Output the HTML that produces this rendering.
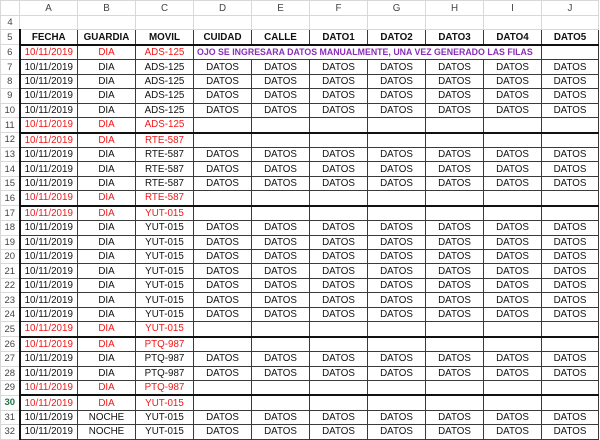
<!DOCTYPE html><html><head><style>
body{margin:0;background:#fff;width:600px;height:437px;overflow:hidden;font-family:"Liberation Sans",sans-serif;}
table{border-collapse:collapse;table-layout:fixed;position:absolute;left:0;top:0;font-size:9.8px;width:598px;}
td{padding:0;text-align:center;white-space:nowrap;overflow:visible;height:13.45px;line-height:13px;border:1px solid #3a3a3a;color:#111;}
td.n{border:1px solid #d8d8d8;color:#444;font-size:9.5px;}
tr.h td{height:14px;border:1px solid #d8d8d8;color:#444;background:#fff;}
tr.e td{border:1px solid #d8d8d8;}
tr.hd td{font-weight:bold;}
tr.hd td.n{font-weight:normal}
tr.t td{border-bottom:2px solid #111;}
tr.t td.n{border-bottom:1px solid #d8d8d8}
.r td{color:#f01818}
.r td.n{color:#444}
td.p{color:#8a2fb8;font-weight:bold;text-align:left;padding-left:3px;overflow:visible;font-size:8.8px}
td.a{border-left:2px solid #111}
</style></head><body>
<table>
<colgroup><col style="width:19px"><col style="width:58px"><col style="width:58px"><col style="width:58px"><col style="width:58px"><col style="width:58px"><col style="width:58px"><col style="width:58px"><col style="width:58px"><col style="width:58px"><col style="width:57px"></colgroup>
<tr class="h"><td></td><td>A</td><td>B</td><td>C</td><td>D</td><td>E</td><td>F</td><td>G</td><td>H</td><td>I</td><td>J</td></tr>
<tr class="e"><td class="n">4</td><td></td><td></td><td></td><td></td><td></td><td></td><td></td><td></td><td></td><td></td></tr>
<tr class="hd t"><td class="n">5</td><td class="a">FECHA</td><td>GUARDIA</td><td>MOVIL</td><td>CUIDAD</td><td>CALLE</td><td>DATO1</td><td>DATO2</td><td>DATO3</td><td>DATO4</td><td>DATO5</td></tr>
<tr class="r"><td class="n">6</td><td class="a">10/11/2019</td><td>DIA</td><td>ADS-125</td><td colspan="6" class="p">OJO SE INGRESARA DATOS MANUALMENTE, UNA VEZ GENERADO LAS FILAS</td><td></td></tr>
<tr><td class="n">7</td><td class="a">10/11/2019</td><td>DIA</td><td>ADS-125</td><td>DATOS</td><td>DATOS</td><td>DATOS</td><td>DATOS</td><td>DATOS</td><td>DATOS</td><td>DATOS</td></tr>
<tr><td class="n">8</td><td class="a">10/11/2019</td><td>DIA</td><td>ADS-125</td><td>DATOS</td><td>DATOS</td><td>DATOS</td><td>DATOS</td><td>DATOS</td><td>DATOS</td><td>DATOS</td></tr>
<tr><td class="n">9</td><td class="a">10/11/2019</td><td>DIA</td><td>ADS-125</td><td>DATOS</td><td>DATOS</td><td>DATOS</td><td>DATOS</td><td>DATOS</td><td>DATOS</td><td>DATOS</td></tr>
<tr><td class="n">10</td><td class="a">10/11/2019</td><td>DIA</td><td>ADS-125</td><td>DATOS</td><td>DATOS</td><td>DATOS</td><td>DATOS</td><td>DATOS</td><td>DATOS</td><td>DATOS</td></tr>
<tr class="r t"><td class="n">11</td><td class="a">10/11/2019</td><td>DIA</td><td>ADS-125</td><td></td><td></td><td></td><td></td><td></td><td></td><td></td></tr>
<tr class="r"><td class="n">12</td><td class="a">10/11/2019</td><td>DIA</td><td>RTE-587</td><td></td><td></td><td></td><td></td><td></td><td></td><td></td></tr>
<tr><td class="n">13</td><td class="a">10/11/2019</td><td>DIA</td><td>RTE-587</td><td>DATOS</td><td>DATOS</td><td>DATOS</td><td>DATOS</td><td>DATOS</td><td>DATOS</td><td>DATOS</td></tr>
<tr><td class="n">14</td><td class="a">10/11/2019</td><td>DIA</td><td>RTE-587</td><td>DATOS</td><td>DATOS</td><td>DATOS</td><td>DATOS</td><td>DATOS</td><td>DATOS</td><td>DATOS</td></tr>
<tr><td class="n">15</td><td class="a">10/11/2019</td><td>DIA</td><td>RTE-587</td><td>DATOS</td><td>DATOS</td><td>DATOS</td><td>DATOS</td><td>DATOS</td><td>DATOS</td><td>DATOS</td></tr>
<tr class="r t"><td class="n">16</td><td class="a">10/11/2019</td><td>DIA</td><td>RTE-587</td><td></td><td></td><td></td><td></td><td></td><td></td><td></td></tr>
<tr class="r"><td class="n">17</td><td class="a">10/11/2019</td><td>DIA</td><td>YUT-015</td><td></td><td></td><td></td><td></td><td></td><td></td><td></td></tr>
<tr><td class="n">18</td><td class="a">10/11/2019</td><td>DIA</td><td>YUT-015</td><td>DATOS</td><td>DATOS</td><td>DATOS</td><td>DATOS</td><td>DATOS</td><td>DATOS</td><td>DATOS</td></tr>
<tr><td class="n">19</td><td class="a">10/11/2019</td><td>DIA</td><td>YUT-015</td><td>DATOS</td><td>DATOS</td><td>DATOS</td><td>DATOS</td><td>DATOS</td><td>DATOS</td><td>DATOS</td></tr>
<tr><td class="n">20</td><td class="a">10/11/2019</td><td>DIA</td><td>YUT-015</td><td>DATOS</td><td>DATOS</td><td>DATOS</td><td>DATOS</td><td>DATOS</td><td>DATOS</td><td>DATOS</td></tr>
<tr><td class="n">21</td><td class="a">10/11/2019</td><td>DIA</td><td>YUT-015</td><td>DATOS</td><td>DATOS</td><td>DATOS</td><td>DATOS</td><td>DATOS</td><td>DATOS</td><td>DATOS</td></tr>
<tr><td class="n">22</td><td class="a">10/11/2019</td><td>DIA</td><td>YUT-015</td><td>DATOS</td><td>DATOS</td><td>DATOS</td><td>DATOS</td><td>DATOS</td><td>DATOS</td><td>DATOS</td></tr>
<tr><td class="n">23</td><td class="a">10/11/2019</td><td>DIA</td><td>YUT-015</td><td>DATOS</td><td>DATOS</td><td>DATOS</td><td>DATOS</td><td>DATOS</td><td>DATOS</td><td>DATOS</td></tr>
<tr><td class="n">24</td><td class="a">10/11/2019</td><td>DIA</td><td>YUT-015</td><td>DATOS</td><td>DATOS</td><td>DATOS</td><td>DATOS</td><td>DATOS</td><td>DATOS</td><td>DATOS</td></tr>
<tr class="r t"><td class="n">25</td><td class="a">10/11/2019</td><td>DIA</td><td>YUT-015</td><td></td><td></td><td></td><td></td><td></td><td></td><td></td></tr>
<tr class="r"><td class="n">26</td><td class="a">10/11/2019</td><td>DIA</td><td>PTQ-987</td><td></td><td></td><td></td><td></td><td></td><td></td><td></td></tr>
<tr><td class="n">27</td><td class="a">10/11/2019</td><td>DIA</td><td>PTQ-987</td><td>DATOS</td><td>DATOS</td><td>DATOS</td><td>DATOS</td><td>DATOS</td><td>DATOS</td><td>DATOS</td></tr>
<tr><td class="n">28</td><td class="a">10/11/2019</td><td>DIA</td><td>PTQ-987</td><td>DATOS</td><td>DATOS</td><td>DATOS</td><td>DATOS</td><td>DATOS</td><td>DATOS</td><td>DATOS</td></tr>
<tr class="r t"><td class="n">29</td><td class="a">10/11/2019</td><td>DIA</td><td>PTQ-987</td><td></td><td></td><td></td><td></td><td></td><td></td><td></td></tr>
<tr class="r"><td class="n" style="color:#217346;font-weight:bold">30</td><td class="a">10/11/2019</td><td>DIA</td><td>YUT-015</td><td></td><td></td><td></td><td></td><td></td><td></td><td></td></tr>
<tr><td class="n">31</td><td class="a">10/11/2019</td><td>NOCHE</td><td>YUT-015</td><td>DATOS</td><td>DATOS</td><td>DATOS</td><td>DATOS</td><td>DATOS</td><td>DATOS</td><td>DATOS</td></tr>
<tr><td class="n">32</td><td class="a">10/11/2019</td><td>NOCHE</td><td>YUT-015</td><td>DATOS</td><td>DATOS</td><td>DATOS</td><td>DATOS</td><td>DATOS</td><td>DATOS</td><td>DATOS</td></tr>
</table>
</body></html>
